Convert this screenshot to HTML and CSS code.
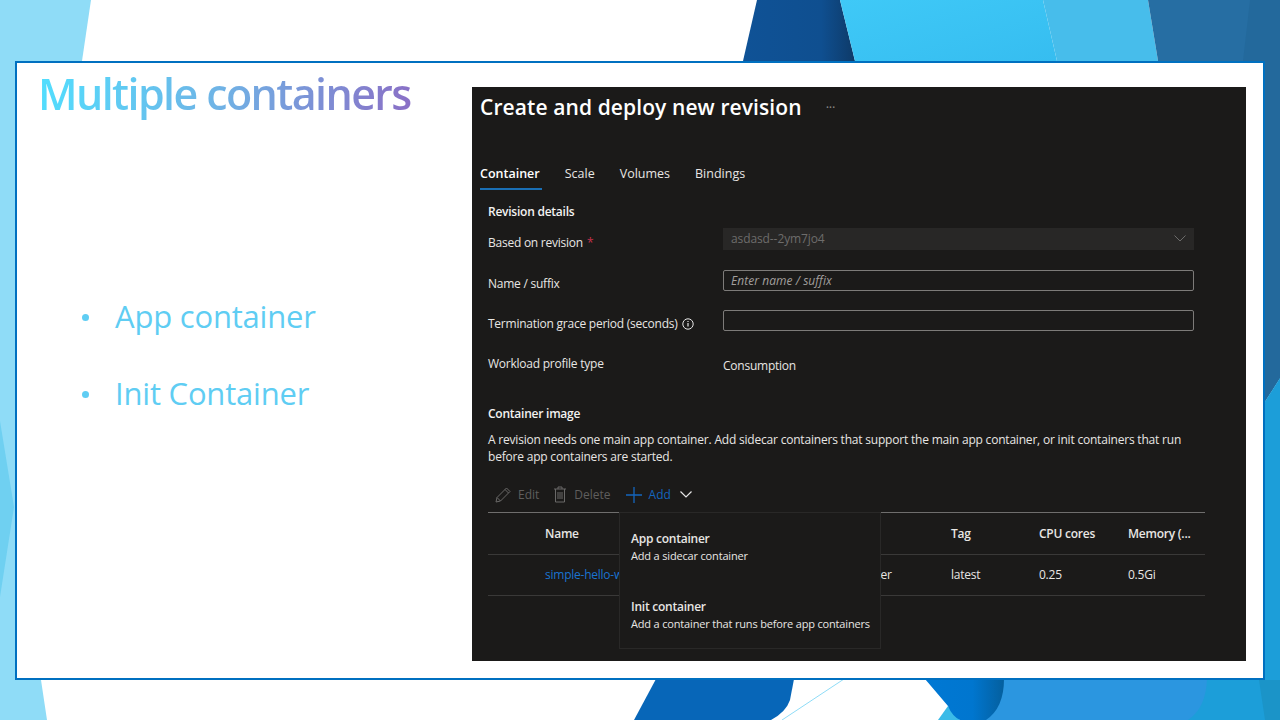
FILE: index.html
```html
<!DOCTYPE html>
<html lang="en">
<head>
  <meta charset="UTF-8">
  <title>Multiple containers</title>
  <link rel="stylesheet" href="styles.css">
</head>
<body>
  <!-- slide background shapes -->
  <svg class="backdrop" width="1280" height="720" viewBox="0 0 1280 720">
    <defs>
      <linearGradient id="navy" x1="0" y1="0" x2="1" y2="0">
        <stop offset="0" stop-color="#0f5296"/>
        <stop offset="0.7" stop-color="#0f4f90"/>
        <stop offset="1" stop-color="#0e3a68"/>
      </linearGradient>
      <linearGradient id="sky" x1="0" y1="0" x2="1" y2="1">
        <stop offset="0" stop-color="#3fc9f7"/>
        <stop offset="1" stop-color="#36bdf0"/>
      </linearGradient>
      <linearGradient id="blueFold" x1="0" y1="0" x2="1" y2="0">
        <stop offset="0" stop-color="#0078d4"/>
        <stop offset="0.6" stop-color="#0076cf"/>
        <stop offset="1" stop-color="#045f9e"/>
      </linearGradient>
    </defs>
    <polygon points="0,0 91,0 82,61 0,61" fill="#8fdcf7"/>
    <polygon points="0,61 16,61 16,680 41,680 47,720 0,720" fill="#8fdcf7"/>
    <polygon points="0,421 14,507 0,597" fill="#6fd0f1"/>
    <polygon points="743,61 757,0 840,0 855,61" fill="url(#navy)"/>
    <polygon points="840,0 1043,0 1057,61 855,61" fill="url(#sky)"/>
    <polygon points="1043,0 1148,0 1158,61 1057,61" fill="#47bdeb"/>
    <polygon points="1148,0 1280,0 1280,378 1264,403 1264,61 1158,61" fill="#266ea3"/>
    <polygon points="1250,0 1280,0 1280,378 1264,403 1264,61 1243,61" fill="#23699c"/>
    <polygon points="1264,403 1280,378 1280,720 1180,720 1180,680 1264,680" fill="#1c9ed9"/>
    <polygon points="1259,680 1280,680 1280,720 1265,720" fill="#1b94c8"/>
    <path d="M656 679 H794 L790 700 Q786 712 771 720 H634 Z" fill="#0766b8"/>
    <line x1="844" y1="679" x2="782" y2="720" stroke="#8fdcf7" stroke-width="1"/>
    <polygon points="938,720 948,706 960,720" fill="#3bbbe8"/>
    <path d="M1003 679 H1207 Q1206 708 1188 720 H980 Z" fill="#2b96e0"/>
    <path d="M925 679 H1004 Q1004 708 986 720 H960 Q952 716 948 706 Z" fill="url(#blueFold)"/>
  </svg>

  <main class="slide">
    <section class="notes">
      <h1 class="slide-title">Multiple containers</h1>
      <ul class="points">
        <li>App container</li>
        <li>Init Container</li>
      </ul>
    </section>

    <section class="shot">
      <div class="shot-head">
        <h2>Create and deploy new revision</h2>
        <span class="more">···</span>
      </div>

      <nav class="tabs">
        <a class="tab active">Container</a>
        <a class="tab">Scale</a>
        <a class="tab">Volumes</a>
        <a class="tab">Bindings</a>
      </nav>

      <div class="shot-body">
        <h3 class="first">Revision details</h3>

        <div class="row row-select">
          <label>Based on revision <span class="req">*</span></label>
          <div class="select">
            <span>asdasd--2ym7jo4</span>
            <svg width="12" height="7" viewBox="0 0 12 7"><path d="M.5.5 6 6l5.500-5.500" fill="none" stroke="#6d6c6b"/></svg>
          </div>
        </div>
        <div class="row row-name">
          <label>Name / suffix</label>
          <div class="input placeholder">Enter name / suffix</div>
        </div>
        <div class="row row-grace">
          <label>Termination grace period (seconds)
            <svg class="info" width="12" height="12" viewBox="0 0 12 12"><circle cx="6" cy="6" r="5.200" fill="none" stroke="#e6e6e6"/><path d="M6 5v3.600M6 3v1.100" stroke="#e6e6e6" stroke-width="1.200"/></svg>
          </label>
          <div class="input"></div>
        </div>
        <div class="row row-profile">
          <label>Workload profile type</label>
          <div class="value">Consumption</div>
        </div>

        <h3 class="second">Container image</h3>
        <p class="blurb">A revision needs one main app container. Add sidecar containers that support the main app container, or init containers that run before app containers are started.</p>

        <div class="toolbar">
          <span class="tool">
            <svg width="16" height="16" viewBox="0 0 16 16"><path d="M1 15l1-4.500L11.500 1 15 4.500 5.500 14zM2 10.500 5.500 14M10 2.500 13.500 6" fill="none" stroke="#6a6968"/></svg>
            Edit
          </span>
          <span class="tool">
            <svg width="14" height="17" viewBox="0 0 14 17"><path d="M1 3h12M5 3V1h4v2M2.500 3v13h9V3M5 6v7M7 6v7M9 6v7" fill="none" stroke="#6a6968"/></svg>
            Delete
          </span>
          <span class="tool add">
            <svg width="16" height="16" viewBox="0 0 16 16"><path d="M8 0v16M0 8h16" stroke="#1465bd" stroke-width="1.300"/></svg>
            Add
            <svg class="caret" width="12" height="7" viewBox="0 0 12 7"><path d="M.5.500 6 6l5.500-5.500" fill="none" stroke="#e6e6e6" stroke-width="1.200"/></svg>
          </span>

          <div class="menu">
            <div class="menu-item first-item">
              <strong>App container</strong>
              <span>Add a sidecar container</span>
            </div>
            <div class="menu-item">
              <strong>Init container</strong>
              <span>Add a container that runs before app containers</span>
            </div>
          </div>
        </div>

        <div class="grid-row grid-head">
          <span>Name</span>
          <span>Type</span>
          <span>Tag</span>
          <span>CPU cores</span>
          <span>Memory (...</span>
        </div>
        <div class="grid-row grid-line">
          <a>simple-hello-world-container</a>
          <span>App container</span>
          <span>latest</span>
          <span>0.25</span>
          <span>0.5Gi</span>
        </div>
      </div>
    </section>
  </main>
</body>
</html>
```

FILE: styles.css
```css
html, body {
  margin: 0;
  padding: 0;
}
body {
  width: 1280px;
  height: 720px;
  position: relative;
  overflow: hidden;
  background: white;
  font-family: "Open Sans", "Noto Sans", sans-serif;
}
.backdrop {
  position: absolute;
  left: 0;
  top: 0;
}

.slide {
  position: absolute;
  left: 15px;
  top: 61px;
  width: 1250px;
  height: 619px;
  box-sizing: border-box;
  border: 2px solid #0070c0;
  background: white;
  display: flex;
}

.notes {
  width: 455px;
  flex-shrink: 0;
}
.slide-title {
  margin: 0;
  padding: 0 0 0 21px;
  height: 62px;
  line-height: 62px;
  font-size: 43px;
  font-weight: 600;
  letter-spacing: -1.6px;
  white-space: nowrap;
  width: 378px;
  background: linear-gradient(100deg, #50e0ff 4%, #6fb4e6 50%, #8a6fc6 98%);
  -webkit-background-clip: text;
  background-clip: text;
  color: transparent;
}
.points {
  list-style: none;
  margin: 169px 0 0 0;
  padding: 0 0 0 63px;
  color: #5fcdf3;
  font-size: 31px;
  letter-spacing: -0.2px;
}
.points li {
  height: 77px;
  line-height: 44px;
  position: relative;
  padding-left: 35px;
}
.points li::before {
  content: "";
  position: absolute;
  left: 2px;
  top: 20px;
  width: 7px;
  height: 7px;
  border-radius: 50%;
  background: #5fcdf3;
}

.shot {
  width: 774px;
  height: 574px;
  margin-top: 24px;
  background: #1b1a19;
  color: #e8e6e4;
  font-size: 12px;
  letter-spacing: -0.24px;
}
.shot-head {
  height: 73px;
  padding: 0 8px;
  box-sizing: border-box;
  display: flex;
  align-items: flex-start;
}
.shot-head h2 {
  margin: 0;
  padding-top: 2px;
  font-size: 21px;
  line-height: 36px;
  font-weight: 600;
  letter-spacing: 0.1px;
  color: white;
}
.more {
  margin-left: 24px;
  padding-top: 11px;
  font-size: 13px;
  color: #8a8886;
}
.tabs {
  display: flex;
  gap: 23px;
  height: 30px;
  padding-left: 8px;
}
.tab {
  line-height: 28px;
  height: 30px;
  box-sizing: border-box;
  font-size: 12.5px;
  letter-spacing: 0;
  padding-right: 2px;
}
.tab.active {
  font-weight: 600;
  color: white;
  border-bottom: 2px solid #1a6fb5;
}

.shot-body {
  padding: 0 41px 0 16px;
}
.shot-body h3 {
  margin: 0;
  height: 20px;
  line-height: 20px;
  font-size: 12px;
  font-weight: 600;
  color: #f3f2f1;
}
.shot-body h3.first {
  margin-top: 12px;
}
.shot-body h3.second {
  margin-top: 28px;
}

.row {
  display: grid;
  grid-template-columns: 235px 471px;
}
.row label {
  display: flex;
  align-items: center;
  gap: 4px;
}
.row-select {
  margin-top: 6px;
  height: 22px;
}
.row-select label {
  padding-top: 6px;
}
.row-name {
  margin-top: 20px;
  height: 21px;
}
.row-name label, .row-grace label {
  padding-top: 5px;
}
.row-grace {
  margin-top: 19px;
  height: 21px;
}
.row-profile {
  margin-top: 25px;
  height: 20px;
  line-height: 20px;
}
.row-profile label {
  height: 16px;
}
.req {
  color: #c4314b;
}
.select {
  display: flex;
  justify-content: space-between;
  align-items: center;
  background: #282726;
  color: #6d6c6b;
  padding: 0 8px 0 8px;
  height: 22px;
  padding-bottom: 2px;
  box-sizing: border-box;
  letter-spacing: -0.1px;
}
.input {
  border: 1px solid #7d7b79;
  border-radius: 2px;
  box-sizing: border-box;
  height: 21px;
  line-height: 19px;
  padding: 0 7px;
}
.placeholder {
  font-style: italic;
  color: #a19f9d;
  letter-spacing: 0.05px;
}

.blurb {
  margin: 7px 0 0 0;
  line-height: 17px;
  letter-spacing: -0.2px;
}

.toolbar {
  position: relative;
  margin-top: 15px;
  height: 32px;
  box-sizing: border-box;
  padding-bottom: 3px;
  display: flex;
  align-items: center;
  padding-left: 7px;
  gap: 14px;
  letter-spacing: 0;
}
.tool {
  display: flex;
  align-items: center;
  gap: 7px;
  color: #5f5e5d;
}
.tool.add {
  color: #1465bd;
  margin-left: 1px;
}
.caret {
  margin-left: 2px;
}
.menu {
  position: absolute;
  left: 131px;
  top: 32px;
  width: 262px;
  height: 137px;
  box-sizing: border-box;
  background: #1b1a19;
  border: 1px solid #292827;
  padding: 0 11px;
  z-index: 2;
}
.menu-item {
  display: flex;
  flex-direction: column;
  line-height: 17px;
  font-size: 11px;
  margin-top: 34px;
  white-space: nowrap;
  letter-spacing: -0.17px;
}
.menu-item.first-item {
  margin-top: 17px;
}
.menu-item strong {
  font-size: 12px;
  font-weight: 600;
  letter-spacing: -0.24px;
}

.grid-row {
  display: grid;
  grid-template-columns: 271px 135px 88px 89px 77px;
  padding-left: 57px;
  align-items: center;
  white-space: nowrap;
}
.grid-head {
  height: 43px;
  box-sizing: border-box;
  border-top: 1px solid #6f6e6d;
  border-bottom: 1px solid #3a3938;
  font-weight: 600;
}
.grid-line {
  height: 41px;
  box-sizing: border-box;
  padding-bottom: 1px;
  border-bottom: 1px solid #3a3938;
}
.grid-line a {
  color: #1a73d0;
}
```
